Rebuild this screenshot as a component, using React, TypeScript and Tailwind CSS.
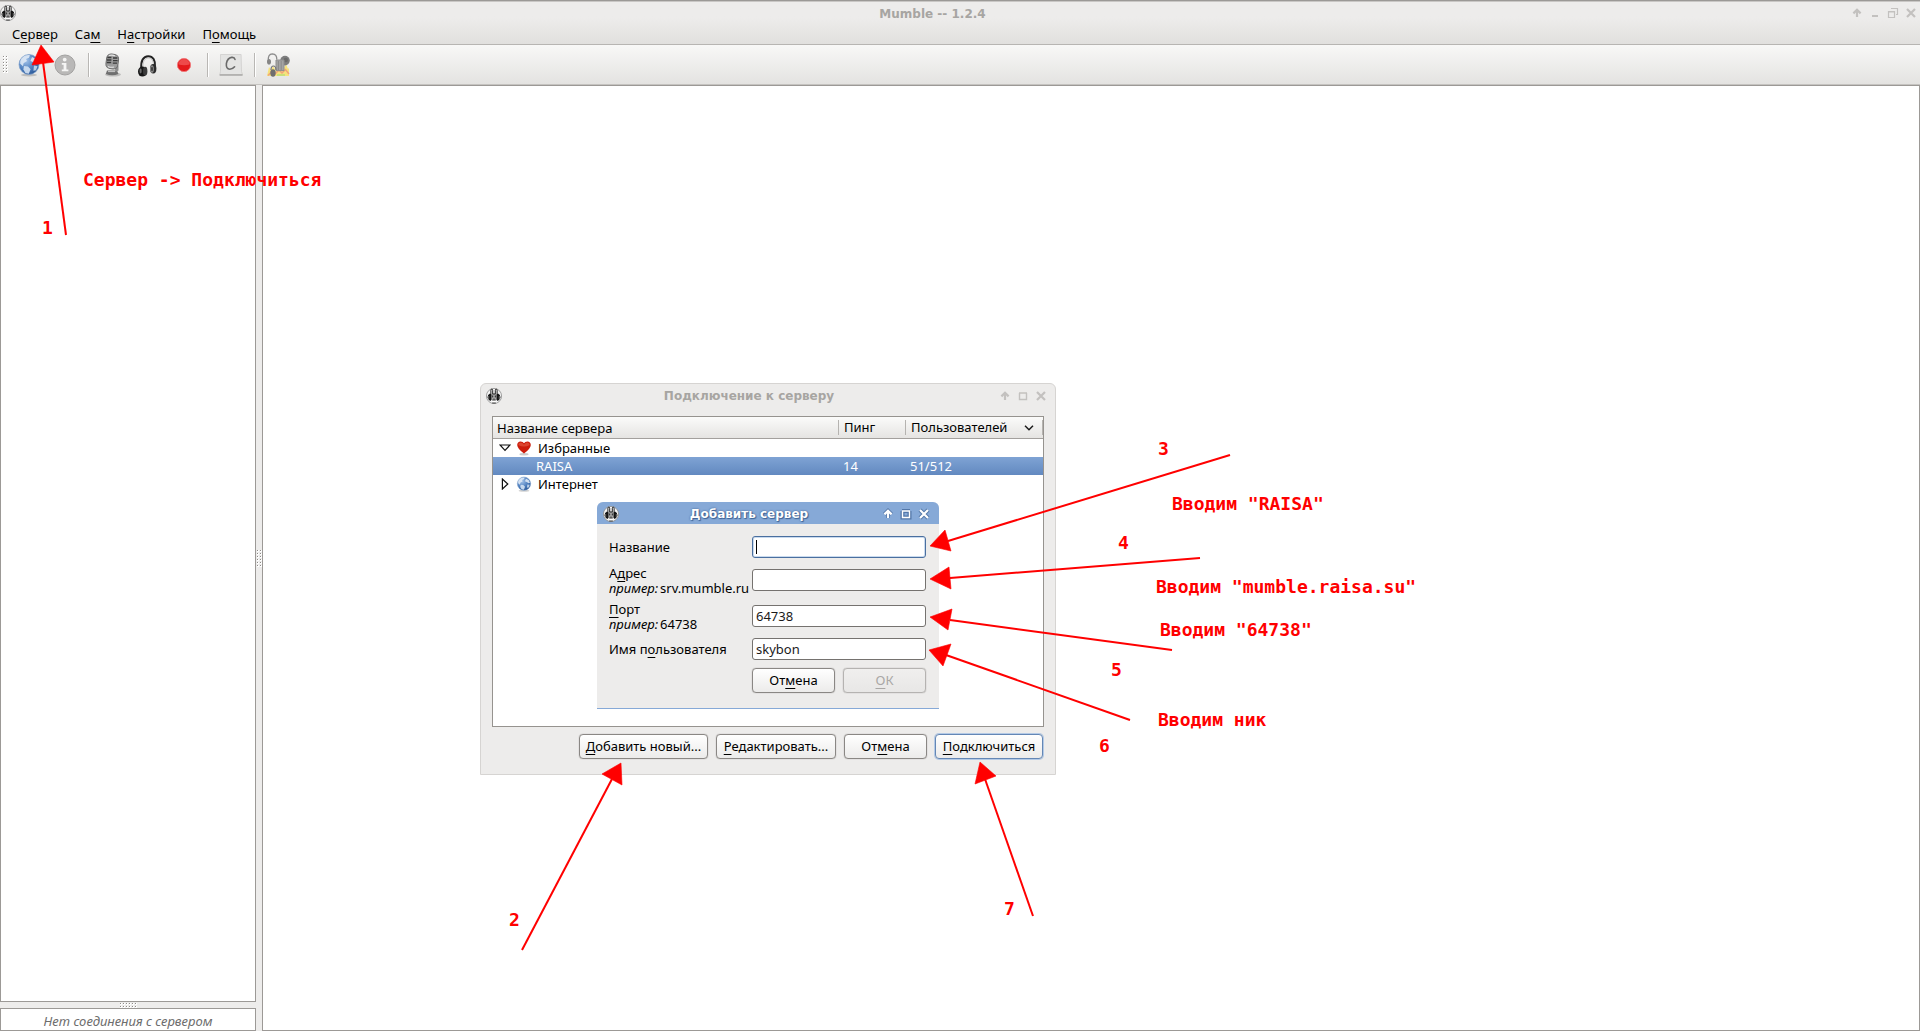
import type { ReactNode } from "react";

/* Text with an underlined mnemonic letter */
function Mn({ text, at }: { text: string; at: number }) {
  return (
    <span>
      {text.slice(0, at)}
      <span className="underline decoration-1 underline-offset-3 [text-decoration-skip-ink:none]">{text[at]}</span>
      {text.slice(at + 1)}
    </span>
  );
}

function MumbleLogo() {
  return (
    <svg viewBox="0 0 16 16" className="size-4 shrink-0" aria-hidden="true">
      <circle cx="8" cy="8" r="7.6" fill="#f4f4f4" stroke="#8d8d8d" strokeWidth="0.8" />
      <path d="M4.9 7V2.2q0-1 .9-1t.9 1V6h2.6V2.2q0-1 .9-1t.9 1V7" fill="#fff" stroke="#1c1c1c" strokeWidth="1" />
      <path d="M4 5.4Q1.6 6.6 1.5 9.3q.2 2.6 2.7 3.6l1-.6V6.2zM12 5.4q2.4 1.2 2.5 3.9-.2 2.6-2.7 3.6l-1-.6V6.2z" fill="#141414" />
      <path d="M2.7 8v3M13.3 8v3" stroke="#999" strokeWidth="0.7" />
      <path d="M5.4 7.2Q8 5.2 10.6 7.2v4.2Q8 14.4 5.4 11.4z" fill="#a9a9a9" stroke="#333" strokeWidth="0.6" />
      <path d="M6.7 7.6v1.8M9.3 7.6v1.8M7.2 11.2h1.6" stroke="#111" strokeWidth="0.9" />
      <path d="M6.4 13.4h3.2" stroke="#fff" strokeWidth="1.4" />
      <path d="M6.2 15h3.6" stroke="#444" strokeWidth="1" />
    </svg>
  );
}

type WinKind = "shade" | "min" | "max" | "restore" | "close";
const WIN_LABELS: Record<WinKind, string> = {
  shade: "Скрутить",
  min: "Свернуть",
  max: "Развернуть",
  restore: "Восстановить",
  close: "Закрыть",
};

function WinShape({ kind }: { kind: WinKind }) {
  if (kind === "shade") return <path d="M6 10V3.6M2.4 6.4 6 2.8l3.6 3.6" fill="none" strokeWidth="2.2" />;
  if (kind === "min") return <path d="M3 9h6" strokeWidth="2" />;
  if (kind === "max") return <path d="M2 3h8M2.5 3v6.5h7V3" fill="none" strokeWidth="1.4" />;
  if (kind === "restore")
    return <path d="M1.5 5h6M1.5 4.5v6h6v-6zM4 1.5h7M10.5 1.5v6H9" fill="none" strokeWidth="1.2" />;
  return <path d="m2 2 8 8M10 2l-8 8" strokeWidth="2.2" />;
}

function WinButton({ kind, active }: { kind: WinKind; active?: boolean }) {
  return (
    <button type="button" aria-label={WIN_LABELS[kind]} className="flex size-[18px] items-center justify-center">
      <svg viewBox="0 0 12 12" className="size-3 overflow-visible">
        {active && (
          <g stroke="#416799" opacity="0.75" className="[&>path]:[stroke-width:4px]">
            <WinShape kind={kind} />
          </g>
        )}
        <g stroke={active ? "#fff" : "#c3c1bf"}>
          <WinShape kind={kind} />
        </g>
      </svg>
    </button>
  );
}

function Globe({ size }: { size: "small" | "large" }) {
  return (
    <svg viewBox="0 0 24 24" className={size === "large" ? "size-6" : "size-4"} aria-hidden="true">
      <defs>
        <radialGradient id={"globe-" + size} cx="0.35" cy="0.3" r="0.8">
          <stop offset="0" stopColor="#a3c3ea" />
          <stop offset="0.6" stopColor="#4a7bbb" />
          <stop offset="1" stopColor="#26518f" />
        </radialGradient>
      </defs>
      <ellipse cx="12" cy="22" rx="8" ry="1.5" fill="#000" opacity="0.18" />
      <circle cx="12" cy="11.5" r="10" fill={"url(#globe-" + size + ")"} stroke="#7d9fcb" strokeWidth="0.7" />
      <path d="M4.5 5.5Q8 1.6 13 2.2l-1 2.6-3 1.2 1 2-3.4 2.2-.6 3-2.8-2.4Q2.6 8 4.5 5.5z" fill="#dfe9f5" opacity="0.9" />
      <path d="m15 4 4 2 2 4-2 1-3-2-2.6-1z" fill="#e6eef8" opacity="0.85" />
      <path d="m7 13 4 .6 2.6 2.6-1.8 4.6-3.4-.8-2-3.6z" fill="#d4e2f3" opacity="0.9" />
      <path d="m17 12.6 3.6.6-1.6 4-2.6.6z" fill="#cfdff1" opacity="0.85" />
    </svg>
  );
}

function InfoIcon() {
  return (
    <svg viewBox="0 0 24 24" className="size-6" aria-hidden="true">
      <circle cx="12" cy="12" r="10" fill="#b9b8b7" stroke="#a3a2a1" />
      <circle cx="11.7" cy="6.6" r="1.9" fill="#f5f5f4" />
      <path d="M8.8 10h4.6v6.4h2v1.8H8.8v-1.8h1.8v-4.6H8.8z" fill="#f5f5f4" />
    </svg>
  );
}

function MicIcon() {
  return (
    <svg viewBox="0 0 24 24" className="size-6" aria-hidden="true">
      <ellipse cx="13" cy="21.5" rx="8" ry="2" fill="#000" opacity="0.18" />
      <path d="M7 17.5h10l1.4 3.6q-6 2.4-12.6 0z" fill="#6f6f6f" />
      <path d="M14.5 12.5h4v5l-3 1.5z" fill="#8d8d8d" />
      <rect x="6.2" y="1.2" width="12" height="14.6" rx="4.5" transform="rotate(8 12 9)" fill="#9c9c9c" stroke="#6c6c6c" />
      <path d="M7.4 4.5h4M7 7h4.4M6.8 9.5h4.4M13 5h4.4M13 7.6h4.6M12.8 10.2H17" stroke="#3a3a3a" strokeWidth="1.3" />
      <path d="M9 2.6q3-1 6 .2M8 13.4q3 1.4 6 .6" stroke="#e6e6e6" strokeWidth="1.1" fill="none" />
      <path d="M8 18.6h7" stroke="#c9c9c9" />
    </svg>
  );
}

function HeadphonesIcon() {
  return (
    <svg viewBox="0 0 24 24" className="size-6" aria-hidden="true">
      <path d="M5.4 16C4.4 8 7.4 3.2 12.2 3.2s7.4 4 6.8 11" fill="none" stroke="#222" strokeWidth="2" />
      <path d="M7 13C7 8.2 9 5 12.2 5s5.2 3 5.4 6.4" fill="none" stroke="#b8b8b8" strokeWidth="0.8" />
      <ellipse cx="6.4" cy="18.6" rx="4.4" ry="5" fill="#171717" />
      <ellipse cx="9.2" cy="18.2" rx="2.2" ry="4.4" fill="#3b3b3b" />
      <ellipse cx="4.6" cy="18" rx="1.1" ry="2.4" fill="#6b6b6b" />
      <ellipse cx="17.2" cy="15.8" rx="3.2" ry="4.8" fill="#2a2a2a" />
      <ellipse cx="16" cy="16" rx="1.9" ry="3.8" fill="#8c8c8c" />
      <ellipse cx="16" cy="16" rx="0.9" ry="2.3" fill="#333" />
    </svg>
  );
}

function RecordIcon() {
  return (
    <svg viewBox="0 0 24 24" className="size-6" aria-hidden="true">
      <circle cx="12" cy="12" r="6.6" fill="#e3191b" stroke="#f0787a" />
      <path d="M6.5 11.5a5.5 5.5 0 0 1 11 0q-5 1.6-11 0z" fill="#f25a5b" opacity="0.75" />
    </svg>
  );
}

function CommentIcon() {
  return (
    <svg viewBox="0 0 24 24" className="size-6" aria-hidden="true">
      <path d="M1.5 1.5h20.6l.4 17 1 3H.8l.7-3z" fill="#e4e4e3" stroke="#cfcecd" strokeWidth="0.8" />
      <path d="M.6 22h23" stroke="#a5a4a3" strokeWidth="1.4" />
      <path d="M16 6.4q-.6-2.4-3.4-2Q8.4 5.2 7.4 10.4q-.6 5.6 3.4 5.8 2.8 0 4.8-2.4" fill="none" stroke="#6a6a6a" strokeWidth="1.6" strokeLinecap="round" />
    </svg>
  );
}

function PluginIcon() {
  return (
    <svg viewBox="0 0 24 24" className="size-6" aria-hidden="true">
      <path d="M1 23 3 14l2 3 2-4 3 5 4-5 3 4 3-6 2 5 1-1v8z" fill="#f6e27c" />
      <path d="m2 22.5 4-4 3 2.5 4-4 3 3 3.5-3.5L23 21" fill="none" stroke="#f0a27b" strokeWidth="1.4" />
      <path d="M11 21h8v2h-8z" fill="#c8df7a" />
      <path d="M2.4 8Q1.6 1 6.4.8 11 1 10.8 6.6" fill="none" stroke="#8b8b8b" strokeWidth="1.3" />
      <ellipse cx="3" cy="8.8" rx="2" ry="2.8" fill="#868686" />
      <circle cx="19" cy="7.6" r="4.8" fill="#7d7d7d" />
      <circle cx="19.8" cy="7" r="2.2" fill="#6a6a6a" />
      <path d="M10 7h8v10.6h-8z" fill="#a4a4a4" stroke="#8e8e8e" />
      <path d="M12.4 8v9M15.2 8v9" stroke="#8a8a8a" />
      <ellipse cx="7" cy="20" rx="2.7" ry="3.7" fill="#6e6e6e" />
      <path d="M5 17q0-4 2.4-4T10 17" fill="none" stroke="#777" strokeWidth="1.2" />
    </svg>
  );
}

function Heart() {
  return (
    <svg viewBox="0 0 16 16" className="size-4" aria-hidden="true">
      <ellipse cx="8" cy="14.2" rx="4.6" ry="1.2" fill="#000" opacity="0.2" />
      <path d="M8 13.6Q1.2 8.4 1.2 5 1.4 1.8 4.6 1.6 7 1.7 8 3.2 9 1.7 11.4 1.6 14.6 1.8 14.8 5 14.8 8.4 8 13.6z" fill="#cc1d0c" />
      <path d="M2.2 5Q2.4 2.6 4.8 2.6 7 2.8 8 4.8 9 2.8 11.2 2.6q2.2.2 2.6 2.4Q8 8 2.2 5z" fill="#e2573f" opacity="0.7" />
    </svg>
  );
}

function ToolButton({ label, children }: { label: string; children: ReactNode }) {
  return (
    <button type="button" aria-label={label} className="flex h-full w-9 items-center justify-center">
      {children}
    </button>
  );
}

function ToolSeparator() {
  return (
    <div className="flex w-[11px] justify-center">
      <div className="h-6 w-0.5 border-l border-[#b9b7b4] bg-white" />
    </div>
  );
}

function Dots({ cols }: { cols: string }) {
  return (
    <div className={"grid gap-px " + cols}>
      {Array.from({ length: 12 }, (_, i) => (
        <span key={i} className="flex size-0.5 bg-white">
          <span className="size-px bg-[#8f8c89]" />
        </span>
      ))}
    </div>
  );
}

const BUTTON =
  "h-[25px] rounded-[4px] border bg-linear-to-b text-center whitespace-nowrap shadow-[0_0_1px_#8c8986]";

function PushButton({
  text,
  at,
  width,
  primary,
  disabled,
}: {
  text: string;
  at: number;
  width: string;
  primary?: boolean;
  disabled?: boolean;
}) {
  const tone = disabled
    ? "border-[#b5b3b1] from-[#f0efee] to-[#e8e7e6] text-[#a9a7a5]"
    : primary
      ? "border-[#6487b5] from-white to-[#ecebea] text-black ring-1 ring-[#b4cae6]"
      : "border-[#8a8784] from-white to-[#ecebea] text-black";
  return (
    <button type="button" disabled={disabled} className={[BUTTON, width, tone].join(" ")}>
      <Mn text={text} at={at} />
    </button>
  );
}

const FIELD = "h-[22px] w-full rounded-[3px] border bg-white px-[3px] text-[#1a1a1a] outline-none";

function FormRow({
  id,
  label,
  example,
  value,
  focused,
}: {
  id: string;
  label: ReactNode;
  example?: string;
  value: string;
  focused?: boolean;
}) {
  return (
    <div className="grid grid-cols-[143px_1fr] items-center">
      <label htmlFor={id} className={"leading-[15px] whitespace-nowrap" + (example ? " pt-0.5" : "")}>
        {label}
        {example && (
          <span className="flex gap-0.5">
            <i>пример:</i>
            <span>{example}</span>
          </span>
        )}
      </label>
      <div className="relative">
        <input
          id={id}
          defaultValue={value}
          className={FIELD + (focused ? " border-[#4a6f9f] shadow-[inset_0_0_0_1px_#c9daee]" : " border-[#75726f]")}
        />
        {focused && <span className="absolute top-1 left-1 h-[14px] w-px bg-black" />}
      </div>
    </div>
  );
}

function AddServerDialog() {
  return (
    <section
      aria-label="Добавить сервер"
      className="absolute top-[502px] left-[597px] w-[342px] rounded-t-[6px] border-b border-[#86a9d7] bg-[#edeceb]"
    >
      <header className="flex h-[22px] items-center rounded-t-[6px] bg-[#86a9d7] px-1.5 pt-0.5 text-white">
        <MumbleLogo />
        <h2 className="flex-1 px-3 text-center font-['DejaVu_Sans'] text-[12px] font-bold [text-shadow:0_0_2px_#34588a,1px_1px_1px_#416799]">
          Добавить сервер
        </h2>
        <WinButton kind="shade" active />
        <WinButton kind="max" active />
        <WinButton kind="close" active />
      </header>
      <form className="flex flex-col pt-3 pr-[13px] pb-[15px] pl-3">
        <FormRow id="name" label="Название" value="" focused />
        <div className="mt-1.5">
          <FormRow id="host" label={<Mn text="Адрес" at={1} />} example="srv.mumble.ru" value="" />
        </div>
        <div className="mt-1">
          <FormRow id="port" label={<Mn text="Порт" at={0} />} example="64738" value="64738" />
        </div>
        <div className="mt-1.5">
          <FormRow id="user" label={<Mn text="Имя пользователя" at={5} />} value="skybon" />
        </div>
        <div className="mt-2 flex justify-end gap-2">
          <PushButton text="Отмена" at={2} width="w-[83px]" />
          <PushButton text="ОК" at={0} width="w-[83px]" disabled />
        </div>
      </form>
    </section>
  );
}

const HEAD = "h-[21px] border-b border-[#a3a09d] px-1 pt-px pb-0 text-left font-normal";

function ConnectDialog() {
  return (
    <section
      aria-label="Подключение к серверу"
      className="absolute top-[383px] left-[480px] flex w-[576px] flex-col rounded-t-[6px] border border-[#d6d4d2] bg-[#edeceb]"
    >
      <header className="flex h-[23px] items-center px-[5px] text-[#a7a5a2]">
        <MumbleLogo />
        <h2 className="flex-1 text-center font-['DejaVu_Sans'] text-[12px] font-bold">Подключение к серверу</h2>
        <WinButton kind="shade" />
        <WinButton kind="max" />
        <WinButton kind="close" />
      </header>
      <div className="mx-[11px] mt-[9px] h-[311px] border border-[#96938f] bg-white">
        <table className="w-full table-fixed border-collapse leading-[18px]">
          <colgroup>
            <col />
            <col className="w-[67px]" />
            <col className="w-[138px]" />
          </colgroup>
          <thead className="bg-linear-to-b from-[#fbfbfa] to-[#e5e4e2]">
            <tr>
              <th className={HEAD}>Название сервера</th>
              <th className={HEAD}>
                <span className="-ml-1 block border-l border-[#b5b3b0] pl-[5px] leading-[15px]">Пинг</span>
              </th>
              <th className={HEAD}>
                <span className="-mr-1 -ml-1 flex items-center justify-between border-r border-l border-[#b5b3b0] pr-2 pl-[5px] leading-[15px]">
                  Пользователей
                  <svg viewBox="0 0 10 6" className="h-1.5 w-2.5" aria-hidden="true">
                    <path d="m1 .8 4 4 4-4" fill="none" stroke="#1a1a1a" strokeWidth="1.5" />
                  </svg>
                </span>
              </th>
            </tr>
          </thead>
          <tbody>
            <tr>
              <td className="p-0" colSpan={3}>
                <span className="flex h-[18px] items-center pl-1.5">
                  <svg viewBox="0 0 12 12" className="mr-[5px] size-3" aria-hidden="true">
                    <path d="M1 3h10L6 8.4z" fill="#fff" stroke="#111" strokeWidth="1.2" />
                  </svg>
                  <Heart />
                  <span className="pl-1.5">Избранные</span>
                </span>
              </td>
            </tr>
            <tr className="h-[18px] bg-linear-to-b from-[#7fa3d4] to-[#6289c0] text-white">
              <td className="p-0 pl-[43px]">RAISA</td>
              <td className="p-0 pl-[5px]">14</td>
              <td className="p-0 pl-[5px]">51/512</td>
            </tr>
            <tr>
              <td className="p-0" colSpan={3}>
                <span className="flex h-[18px] items-center pl-1.5">
                  <svg viewBox="0 0 12 12" className="mr-[5px] size-3" aria-hidden="true">
                    <path d="M3.4 1v10L8.8 6z" fill="#fff" stroke="#111" strokeWidth="1.2" />
                  </svg>
                  <Globe size="small" />
                  <span className="pl-1.5">Интернет</span>
                </span>
              </td>
            </tr>
          </tbody>
        </table>
      </div>
      <footer className="flex justify-end gap-2 px-3 pt-[7px] pb-[15px]">
        <PushButton text="Добавить новый..." at={0} width="w-[129px]" />
        <PushButton text="Редактировать..." at={0} width="w-[120px]" />
        <PushButton text="Отмена" at={2} width="w-[83px]" />
        <PushButton text="Подключиться" at={0} width="w-[108px]" primary />
      </footer>
    </section>
  );
}

/* Step arrows: tail point, the three corners of the head, and the point where the shaft meets it */
const ARROWS = [
  { tail: [66, 235], head: "41,45 32,65 54,62", base: [43, 62] },
  { tail: [522, 950], head: "621,763 602,774 622,785", base: [612, 779] },
  { tail: [1230, 455], head: "930,546 945,530 951,551", base: [948, 541] },
  { tail: [1200, 558], head: "930,579 949,567 951,589", base: [950, 578] },
  { tail: [1172, 650], head: "930,617 952,609 948,630", base: [950, 620] },
  { tail: [1130, 720], head: "929,650 951,644 943,666", base: [946, 655] },
  { tail: [1033, 916], head: "980,762 996,776 975,784", base: [985, 779] },
];

const NOTES = [
  { text: "Сервер -> Подключиться", place: "top-[169px] left-[83px]" },
  { text: "1", place: "top-[217px] left-[42px]" },
  { text: "2", place: "top-[909px] left-[509px]" },
  { text: "3", place: "top-[438px] left-[1158px]" },
  { text: "4", place: "top-[532px] left-[1118px]" },
  { text: "5", place: "top-[659px] left-[1111px]" },
  { text: "6", place: "top-[735px] left-[1099px]" },
  { text: "7", place: "top-[898px] left-[1004px]" },
  { text: 'Вводим "RAISA"', place: "top-[493px] left-[1172px]" },
  { text: 'Вводим "mumble.raisa.su"', place: "top-[576px] left-[1156px]" },
  { text: 'Вводим "64738"', place: "top-[619px] left-[1160px]" },
  { text: "Вводим ник", place: "top-[709px] left-[1158px]" },
];

function Annotations() {
  return (
    <div className="pointer-events-none absolute inset-0 overflow-hidden">
      <svg className="absolute inset-0 size-full" aria-hidden="true">
        {ARROWS.map((a) => (
          <g key={a.head} fill="#f00" stroke="#f00">
            <line x1={a.tail[0]} y1={a.tail[1]} x2={a.base[0]} y2={a.base[1]} strokeWidth="2" />
            <polygon points={a.head} strokeWidth="0.6" />
          </g>
        ))}
      </svg>
      {NOTES.map((n) => (
        <span
          key={n.text}
          className={
            "absolute font-['DejaVu_Sans_Mono'] text-[18px] leading-[21px] font-bold whitespace-pre text-[#f00] " + n.place
          }
        >
          {n.text}
        </span>
      ))}
    </div>
  );
}

const MENU = [
  { text: "Сервер", at: 1 },
  { text: "Сам", at: 2 },
  { text: "Настройки", at: 1 },
  { text: "Помощь", at: 1 },
];

export default function App() {
  return (
    <div className="relative flex h-screen flex-col overflow-hidden bg-[#edeceb] font-['Noto_Sans',sans-serif] text-[13px] text-black">
      <div className="border-t border-b border-t-[#9b9996] border-b-[#b7b5b2] bg-linear-to-b from-[#edeceb] from-40% to-[#e1e0de]">
        <header className="flex h-[23px] items-center border-t border-[#c9c7c5] text-[#a7a5a2]">
          <MumbleLogo />
          <h1 className="flex-1 pt-px pl-px text-center font-['DejaVu_Sans'] text-[12px] font-bold">Mumble -- 1.2.4</h1>
          <WinButton kind="shade" />
          <WinButton kind="min" />
          <WinButton kind="restore" />
          <WinButton kind="close" />
        </header>
        <nav className="flex h-5 items-center gap-[17px] pt-0.5 pl-3">
          {MENU.map((m) => (
            <button type="button" key={m.text}>
              <Mn text={m.text} at={m.at} />
            </button>
          ))}
        </nav>
      </div>
      <div className="flex h-10 items-center border-b border-[#c5c3c0] bg-linear-to-b from-[#f8f8f7] to-[#e4e3e1]">
        <div className="flex w-[11px] justify-center">
          <Dots cols="grid-cols-2" />
        </div>
        <ToolButton label="Подключиться">
          <Globe size="large" />
        </ToolButton>
        <ToolButton label="Информация">
          <InfoIcon />
        </ToolButton>
        <ToolSeparator />
        <ToolButton label="Выключить микрофон">
          <MicIcon />
        </ToolButton>
        <ToolButton label="Выключить звук">
          <HeadphonesIcon />
        </ToolButton>
        <ToolButton label="Запись">
          <RecordIcon />
        </ToolButton>
        <ToolSeparator />
        <ToolButton label="Комментарий">
          <CommentIcon />
        </ToolButton>
        <ToolSeparator />
        <ToolButton label="Настройки">
          <PluginIcon />
        </ToolButton>
      </div>
      <main className="flex min-h-0 flex-1">
        <aside className="flex w-64 flex-col">
          <div className="flex-1 border border-[#9c9996] bg-white" />
          <div className="flex h-1.5 items-center justify-center">
            <Dots cols="grid-cols-6" />
          </div>
          <input
            aria-label="Сообщение"
            placeholder="Нет соединения с сервером"
            className="h-[23px] w-full border border-[#9c9996] bg-white pt-0.5 text-center italic outline-none placeholder:text-[#6d6d6d]"
          />
        </aside>
        <div className="flex w-1.5 items-center justify-center">
          <Dots cols="grid-cols-2" />
        </div>
        <div className="flex-1 border border-[#9c9996] bg-white" />
      </main>
      <ConnectDialog />
      <AddServerDialog />
      <Annotations />
    </div>
  );
}
